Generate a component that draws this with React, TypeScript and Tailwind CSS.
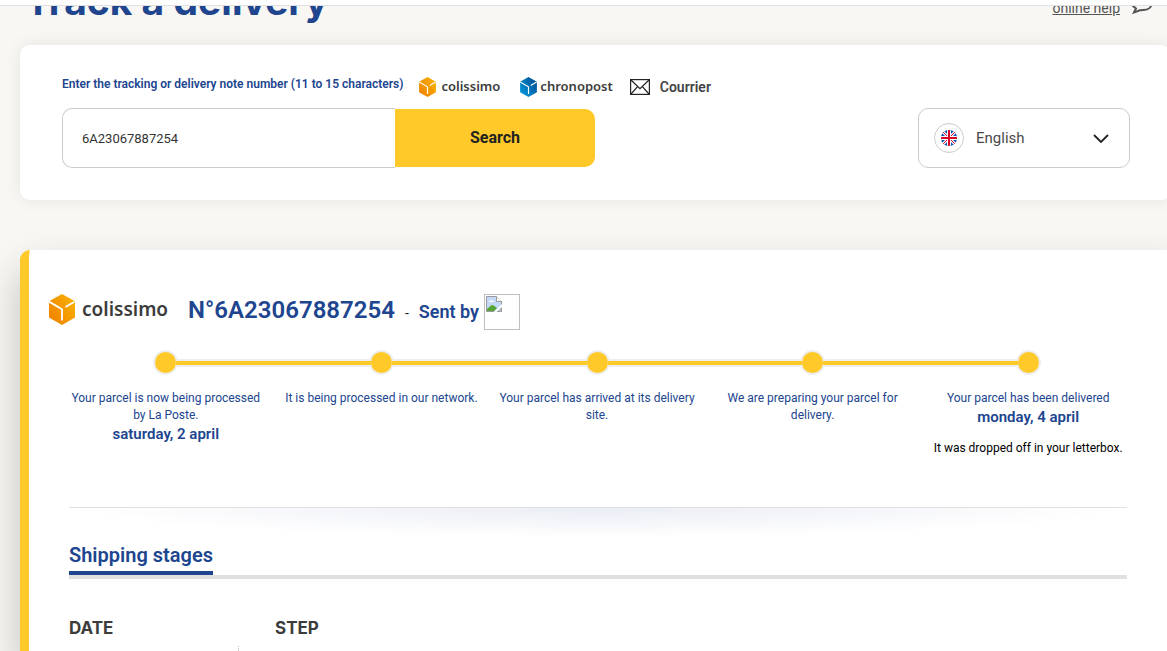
import { useState } from "react";
import clsx from "clsx";

interface Step {
  label: string;
  date?: string;
  note?: string;
}

const steps: Step[] = [
  {
    label: "Your parcel is now being processed by La Poste.",
    date: "saturday, 2 april",
  },
  { label: "It is being processed in our network." },
  { label: "Your parcel has arrived at its delivery site." },
  { label: "We are preparing your parcel for delivery." },
  {
    label: "Your parcel has been delivered",
    date: "monday, 4 april",
    note: "It was dropped off in your letterbox.",
  },
];

interface CubeProps {
  id: string;
  from: string;
  to: string;
  className?: string;
}

function Cube({ id, from, to, className }: CubeProps) {
  return (
    <svg viewBox="0 0 26 31" className={className} aria-hidden="true">
      <defs>
        <linearGradient id={id} x1="0" y1="1" x2="1" y2="0.2">
          <stop offset="0" stopColor={from} />
          <stop offset="1" stopColor={to} />
        </linearGradient>
      </defs>
      <path d="M13 0 26 7.2v16.3L13 31 0 23.5V7.2Z" fill={`url(#${id})`} />
      <path
        d="M0 7.6 13 15.2V26.5M25.5 7.8 16.5 13"
        fill="none"
        stroke="#fff"
        strokeWidth="1.8"
      />
    </svg>
  );
}

function Envelope() {
  return (
    <svg viewBox="0 0 20 16" className="h-4 w-5 text-[#222]" aria-hidden="true">
      <g fill="none" stroke="currentColor" strokeWidth="1.2">
        <rect x="0.6" y="0.6" width="18.8" height="14.8" />
        <path d="M1 1l9 8.600L19 1M1 15l6.600-7.400M19 15l-6.600-7.400" />
      </g>
    </svg>
  );
}

function ChatBubble() {
  return (
    <svg viewBox="0 0 22 20" className="h-5 w-[22px]" aria-hidden="true">
      <path
        d="M12 1c5 0 8.500 2.500 8.500 6.500S17 14 12 14c-1.200 0-2 0-3 .3L3 16.500l2-4-3-2.500C1.500 4 6 1 12 1Z"
        fill="none"
        stroke="#555"
        strokeWidth="2"
      />
    </svg>
  );
}

function UnionJack() {
  return (
    <svg viewBox="0 0 16 16" className="size-4" aria-hidden="true">
      <clipPath id="flag-clip">
        <circle cx="8" cy="8" r="8" />
      </clipPath>
      <g clipPath="url(#flag-clip)">
        <path d="M0 0h16v16H0z" fill="#0052b4" />
        <path d="M0 0l16 16M16 0 0 16" stroke="#fff" strokeWidth="3" />
        <path d="M0 0l16 16M16 0 0 16" stroke="#d80027" strokeWidth="1" />
        <path d="M8 0v16M0 8h16" stroke="#fff" strokeWidth="4" />
        <path d="M8 0v16M0 8h16" stroke="#d80027" strokeWidth="2" />
      </g>
    </svg>
  );
}

function MissingImage() {
  return (
    <svg viewBox="0 0 16 16" className="size-4" aria-hidden="true">
      <path d="M.5.500h10l5 5v10H.5Z" fill="#c3d9f7" stroke="#9a9a9a" />
      <path d="M3 6a1.500 1.500 0 0 1 2-1.500 2 2 0 0 1 3 1.500Z" fill="#fff" />
      <path d="M1 15v-2l4-3.500c1-.8 2-.6 3 .2L11 12l-3 3Z" fill="#57a639" />
      <path d="M10.500.500v5h5" fill="#fff" stroke="#9a9a9a" />
      <path d="M16 8.500 8.500 16H10l6-5.500Z" fill="#fff" stroke="#fff" />
      <path d="M15.500 12v3.500H12Z" fill="#c3d9f7" stroke="#9a9a9a" />
    </svg>
  );
}

function SearchPanel() {
  const [number, setNumber] = useState("6A23067887254");
  const [language, setLanguage] = useState("en");

  return (
    <section className="ml-5 -mr-1 rounded-[10px] bg-white pt-[29px] pr-[41px] pb-8 pl-[42px] shadow-[0_0_16px_rgba(0,0,0,0.08)]">
      <div className="flex h-[34px] items-start">
        <label
          htmlFor="tracking"
          className="text-xs leading-5 font-semibold text-[#20458f]"
        >
          Enter the tracking or delivery note number (11 to 15 characters)
        </label>
        <div className="ml-4 flex h-[26px] items-center text-[#3c3c3b]">
          <Cube
            id="cube-colissimo-sm"
            from="#ef7d00"
            to="#f9b000"
            className="h-5 w-[17px]"
          />
          <span className="ml-[5px] font-['Noto_Sans',sans-serif] text-[13px] font-semibold">
            colissimo
          </span>
          <Cube
            id="cube-chronopost"
            from="#009fe3"
            to="#004f91"
            className="ml-5 h-5 w-[17px]"
          />
          <span className="ml-[3px] font-['Noto_Sans',sans-serif] text-[13px] font-semibold">
            chronopost
          </span>
          <span className="ml-[17px]">
            <Envelope />
          </span>
          <span className="ml-[10px] text-sm font-semibold text-[#444]">
            Courrier
          </span>
        </div>
      </div>
      <div className="flex items-center justify-between">
        <form
          className="flex items-center"
          onSubmit={(e) => e.preventDefault()}
        >
          <input
            id="tracking"
            value={number}
            onChange={(e) => setNumber(e.target.value)}
            className="h-[60px] w-[333px] rounded-l-[10px] border border-r-0 border-[#ccc] pl-[19px] text-[13px] text-[#333] outline-none"
          />
          <button
            type="submit"
            className="h-[58px] w-[200px] rounded-r-[10px] bg-[#ffc929] text-base font-bold text-[#222]"
          >
            Search
          </button>
        </form>
        <div className="relative">
          <select
            aria-label="Language"
            value={language}
            onChange={(e) => setLanguage(e.target.value)}
            className="h-[60px] w-[212px] appearance-none rounded-[10px] border border-[#ccc] bg-white pl-[57px] text-[15px] text-[#4a4a4a]"
          >
            <option value="en">English</option>
            <option value="fr">Français</option>
          </select>
          <span className="pointer-events-none absolute inset-y-0 left-4 flex items-center">
            <span className="flex size-[30px] items-center justify-center rounded-full border border-[#ccc]">
              <UnionJack />
            </span>
          </span>
          <span className="pointer-events-none absolute inset-y-0 right-[21px] flex items-center">
            <svg viewBox="0 0 16 9" className="h-[9px] w-4" aria-hidden="true">
              <path
                d="M1 1l7 7 7-7"
                fill="none"
                stroke="#222"
                strokeWidth="1.8"
              />
            </svg>
          </span>
        </div>
      </div>
    </section>
  );
}

function Timeline() {
  return (
    <ol className="mr-[11px] ml-[29px] grid grid-cols-5 pt-5">
      {steps.map((step, i) => (
        <li key={step.label} className="text-center text-xs leading-[17px]">
          <div className="flex h-[25px] items-center">
            <span
              className={clsx(
                "z-10 h-2 flex-1",
                i > 0 && "border-y-2 border-[#eee] bg-[#ffc929]",
              )}
            />
            <span className="-mx-[2px] size-[25px] rounded-full border-2 border-[#eee] bg-[#ffc929]" />
            <span
              className={clsx(
                "z-10 h-2 flex-1",
                i < steps.length - 1 &&
                  "border-y-2 border-[#eee] bg-[#ffc929]",
              )}
            />
          </div>
          <p className="mt-[15px] px-[10px] text-[#20458f]">{step.label}</p>
          {step.date && (
            <p className="text-[15px] leading-[21px] font-semibold text-[#20458f]">
              {step.date}
            </p>
          )}
          {step.note && <p className="mt-3 text-black">{step.note}</p>}
        </li>
      ))}
    </ol>
  );
}

function ResultPanel() {
  return (
    <section className="mt-[50px] -mr-5 ml-5 flex-1 rounded-tl-[10px] border-l-[9px] border-[#ffc929] bg-white pt-11 pr-10 shadow-[0_20px_40px_rgba(0,0,0,0.22)]">
      <div className="ml-5 flex items-start">
        <Cube
          id="cube-colissimo"
          from="#ef7d00"
          to="#f9b000"
          className="h-[31px] w-[26px]"
        />
        <span className="ml-[7px] font-['Noto_Sans',sans-serif] text-[19px] leading-[30px] font-semibold text-[#3c3c3b]">
          colissimo
        </span>
        <h2 className="ml-5 flex items-baseline text-[#20458f]">
          <span className="text-2xl font-semibold">N°6A23067887254</span>
          <span className="ml-[10px] text-sm text-[#222]">-</span>
          <span className="ml-[10px] text-lg font-semibold">Sent by</span>
        </h2>
        <span
          role="img"
          aria-label="Sender"
          className="ml-[5px] size-9 border border-[#c0c0c0] p-px"
        >
          <MissingImage />
        </span>
      </div>

      <Timeline />

      <div className="mt-[50px] mr-5 ml-10 h-[30px] border-t border-[#e0e0e0] bg-[radial-gradient(ellipse_at_top,#ebedf5_0%,#ffffff_70%)]" />

      <div className="mr-5 ml-10 border-b-4 border-[#e0e0e0]">
        <h3 className="inline-flex h-[38px] items-end border-b-4 border-[#20458f] pb-[2px] align-top text-xl leading-7 font-semibold text-[#20458f]">
          Shipping stages
        </h3>
      </div>

      <table className="mt-[37px] ml-10 text-left">
        <thead>
          <tr className="font-['Inter',sans-serif] text-[17px] leading-6 text-[#3c3c3b]">
            <th className="w-[206px] font-bold">DATE</th>
            <th className="font-bold">STEP</th>
          </tr>
        </thead>
        <tbody>
          <tr>
            <td className="pt-[6px]">
              <div className="h-[5px] w-[170px] border-r border-dotted border-[#bbb]" />
            </td>
            <td />
          </tr>
        </tbody>
      </table>
    </section>
  );
}

export default function App() {
  return (
    <div className="flex min-h-screen flex-col overflow-hidden bg-[#f8f7f3] font-['Roboto',sans-serif]">
      <header className="z-10 h-[6px] border-b border-[#e0e0e0] bg-white" />
      <div className="-mt-[25px] flex h-16 items-start justify-between pr-[14px] pl-[25px]">
        <h1 className="font-['Inter',sans-serif] text-[39px] leading-10 font-bold text-[#20458f]">
          Track a delivery
        </h1>
        <a
          href="#help"
          className="mt-[15px] flex items-start gap-[11px] text-sm leading-6 text-[#555]"
        >
          <span className="underline">online help</span>
          <ChatBubble />
        </a>
      </div>
      <SearchPanel />
      <ResultPanel />
    </div>
  );
}
